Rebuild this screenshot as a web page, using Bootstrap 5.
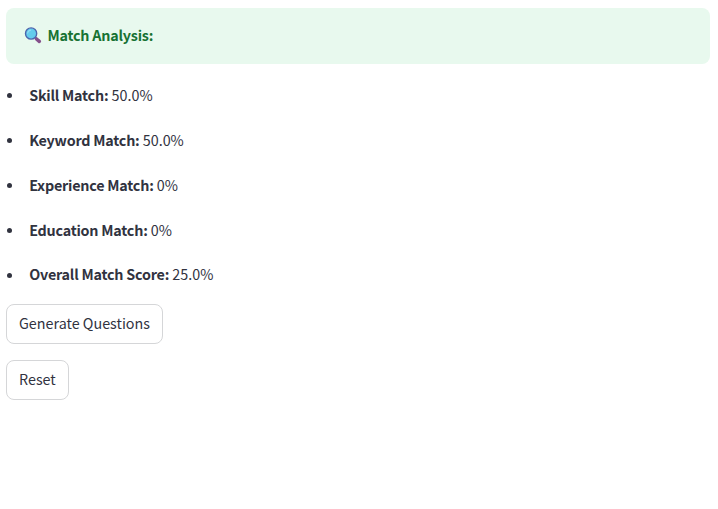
<!DOCTYPE html>
<html lang="en">
<head>
<meta charset="utf-8">
<meta name="viewport" content="width=device-width, initial-scale=1">
<title>Match Analysis</title>
<link rel="stylesheet" href="https://cdn.jsdelivr.net/npm/bootstrap@5.3.0/dist/css/bootstrap.min.css">
<style>
body { font-family: "Noto Sans CJK SC", "Open Sans", sans-serif; font-size: 14.33px; line-height: 25.6px; color: #31333f; }
strong { letter-spacing: -.22px; }
.page { padding: 8px 8px 0 6px; }
.analysis-banner { height: 56px; padding: 0 18px 2px; border: 0; border-radius: 8px; background: #e8f9ee; color: #177233; gap: 5.5px; }
.analysis-banner svg { margin-top: 2px; }
.results { margin: 18.2px 0 17.3px; gap: 19.2px; }
.results li { gap: 17.2px; }
.dot { width: 5px; height: 5px; margin: 2px 0 0 1px; border-radius: 50%; background: #31333f; }
.action { --bs-btn-color: #31333f; --bs-btn-border-color: #d5d6d8; --bs-btn-bg: #fff; --bs-btn-padding-x: 12px; --bs-btn-padding-y: 0; --bs-btn-border-radius: 8px; --bs-btn-font-size: 14.33px; height: 40px; line-height: 36px; padding-bottom: 2px; }
</style>
</head>
<body>
<main class="page">
  <div class="alert analysis-banner d-flex align-items-center mb-0" role="alert">
    <svg width="18" height="18" viewBox="0 0 18 18" aria-hidden="true">
      <path d="M11 10.5l1.6 1.6" stroke="#9b8aa5" stroke-width="2"/>
      <path d="M12.5 12l2.8 2.4" stroke="#85508b" stroke-width="3.6" stroke-linecap="round"/>
      <circle cx="7.1" cy="6.5" r="5.6" fill="#64cbec" stroke="#4c65ad" stroke-width="1.4"/>
      <path d="M3.6 6a3.7 3.7 0 0 1 3-2.9" fill="none" stroke="#93dcf4" stroke-width="1.1" stroke-linecap="round"/>
    </svg>
    <strong>Match Analysis:</strong>
  </div>
  <ul class="results list-unstyled d-flex flex-column">
    <li class="d-flex align-items-center"><span class="dot"></span><span><strong>Skill Match:</strong> 50.0%</span></li>
    <li class="d-flex align-items-center"><span class="dot"></span><span><strong>Keyword Match:</strong> 50.0%</span></li>
    <li class="d-flex align-items-center"><span class="dot"></span><span><strong>Experience Match:</strong> 0%</span></li>
    <li class="d-flex align-items-center"><span class="dot"></span><span><strong>Education Match:</strong> 0%</span></li>
    <li class="d-flex align-items-center"><span class="dot"></span><span><strong>Overall Match Score:</strong> 25.0%</span></li>
  </ul>
  <div class="d-flex flex-column align-items-start gap-3">
    <button type="button" class="btn action">Generate Questions</button>
    <button type="button" class="btn action">Reset</button>
  </div>
</main>
<script src="https://cdn.jsdelivr.net/npm/bootstrap@5.3.0/dist/js/bootstrap.bundle.min.js"></script>
</body>
</html>
